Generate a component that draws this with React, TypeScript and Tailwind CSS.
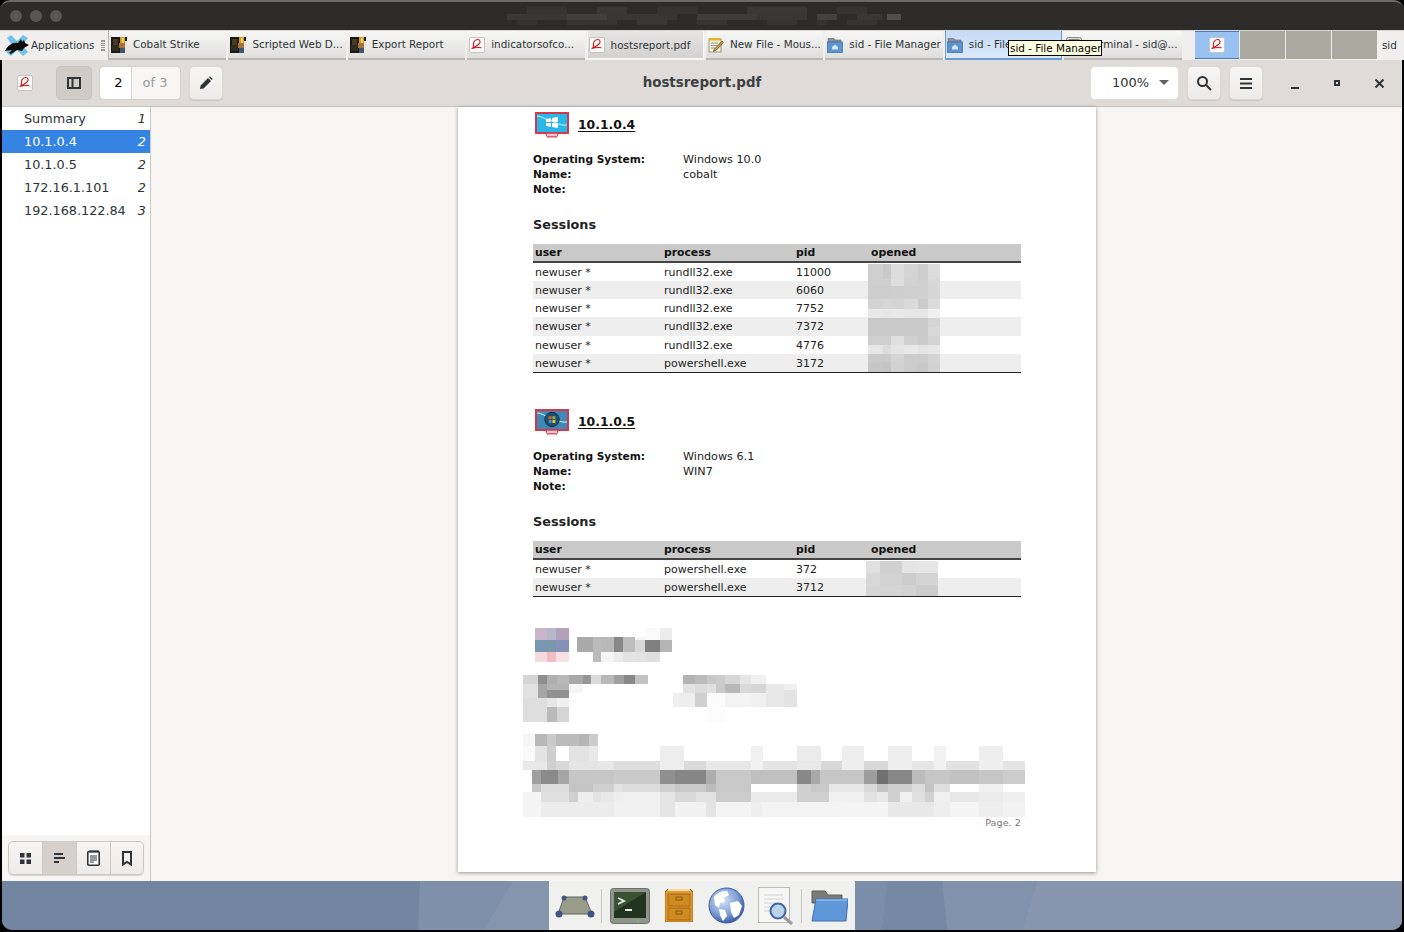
import { ReactNode } from "react";

type Row = [number, number, [number, number, string][]];

const g = (v: string) => `#${v}${v}${v}`;

function Mosaic({ rows, viewBox }: { rows: Row[]; viewBox: string }) {
  return (
    <svg viewBox={viewBox} preserveAspectRatio="none" shapeRendering="crispEdges" className="w-full h-full block">
      {rows.map(([y0, y1, cells], i) =>
        cells.map(([x0, x1, c], j) => <rect key={`${i}-${j}`} x={x0} y={y0} width={x1 - x0} height={y1 - y0} fill={c} />)
      )}
    </svg>
  );
}

function columns(xs: number[], y0: number, y1: number, cols: string[]): Row {
  return [y0, y1, cols.map((c, i) => [xs[i], xs[i + 1], g(c)] as [number, number, string])];
}

const openedXs = [265, 310, 335, 372, 415, 445, 480];
const openedRows: Row[] = [
  columns(openedXs, 75, 118, ["cf", "c9", "dc", "d4", "cd", "dc"]),
  columns(openedXs, 118, 140, ["cf", "cf", "de", "d2", "cf", "d8"]),
  columns(openedXs, 140, 180, ["cd", "cd", "ce", "cf", "cf", "d6"]),
  columns(openedXs, 180, 208, ["d3", "d6", "d4", "da", "cc", "db"]),
  columns(openedXs, 208, 235, ["e8", "e6", "e8", "e6", "e6", "f0"]),
  columns(openedXs, 235, 262, ["c8", "c8", "c8", "c9", "c9", "d4"]),
  columns(openedXs, 262, 288, ["c8", "c8", "c8", "c9", "c9", "d8"]),
  columns(openedXs, 288, 315, ["cf", "cf", "e0", "d0", "cb", "d4"]),
  columns(openedXs, 315, 342, ["e6", "dc", "e4", "e8", "e4", "e8"]),
  columns(openedXs, 342, 365, ["ca", "ca", "d4", "cc", "cc", "d4"]),
  columns(openedXs, 365, 395, ["c6", "c4", "d2", "cc", "c8", "d2"]),
];

const openedRows2: Row[] = [
  columns([0, 14, 36, 50, 72], 0, 12, ["e0", "d0", "e4", "e6"]),
  columns([0, 14, 36, 50, 72], 12, 24, ["d8", "d2", "cc", "d4"]),
  columns([0, 14, 36, 50, 72], 24, 35, ["d6", "d4", "d2", "cc"]),
];

// blurred block under the second session table, in zoomed crop units
const footerRows: Row[] = [
  [27, 63, [[74, 108, "#c9b5c9"], [108, 136, "#b5b7cb"], [136, 175, "#b1a1bb"], [443, 478, "#ececec"], [398, 443, "#fafafa"]]],
  [55, 63, [[245, 270, "#bbbbbb"], [270, 308, "#b8b8b8"], [308, 333, "#888888"], [333, 370, "#bdbdbd"], [370, 398, "#f4f4f4"], [198, 245, "#a9a9a9"]]],
  [63, 100, [[74, 108, "#7b96b0"], [108, 136, "#7a96ad"], [136, 175, "#8591b5"], [198, 245, "#a9a9a9"], [245, 270, "#bbbbbb"], [270, 308, "#b8b8b8"], [308, 333, "#888888"], [333, 370, "#bdbdbd"], [370, 398, "#d8d8d8"], [398, 443, "#808080"], [443, 478, "#b5b5b5"]]],
  [100, 130, [[74, 108, "#f5dadd"], [108, 136, "#f2bcc3"], [136, 175, "#f7e0e2"], [245, 270, "#bbbbbb"], [270, 308, "#f5f5f5"], [308, 333, "#ebebeb"], [333, 370, "#e3e3e3"], [370, 398, "#e2e2e2"], [398, 443, "#dfdfdf"]]],
  [168, 195, [[38, 82, "#d5d5d5"], [82, 108, "#8e8e8e"], [108, 138, "#b0b0b0"], [138, 175, "#b8b8b8"], [175, 215, "#a8a8a8"], [215, 240, "#979797"], [240, 268, "#dadada"], [268, 308, "#b9b9b9"], [308, 337, "#a0a0a0"], [337, 370, "#888888"], [370, 408, "#c3c3c3"], [512, 548, "#b3b3b3"], [548, 582, "#bbbbbb"], [582, 610, "#c8c8c8"], [610, 636, "#cccccc"], [636, 680, "#d6d6d6"], [680, 713, "#e6e6e6"], [713, 757, "#f0f0f0"]]],
  [195, 212, [[38, 82, "#e1e1e1"], [82, 108, "#a5a5a5"], [108, 175, "#b4b4b4"], [175, 215, "#f6f6f6"], [512, 548, "#e3e3e3"], [548, 582, "#dcdcdc"], [582, 610, "#e0e0e0"], [610, 636, "#c9c9c9"], [636, 680, "#b9b9b9"], [680, 713, "#d9d9d9"], [713, 757, "#d6d6d6"], [757, 810, "#e8e8e8"], [810, 850, "#f0f0f0"]]],
  [212, 222, [[38, 82, "#e1e1e1"], [82, 108, "#a5a5a5"], [108, 175, "#919191"], [175, 215, "#f6f6f6"], [512, 548, "#e3e3e3"], [548, 582, "#dcdcdc"], [582, 610, "#e0e0e0"], [610, 636, "#c9c9c9"], [636, 680, "#b9b9b9"], [680, 713, "#d9d9d9"], [713, 757, "#d6d6d6"], [757, 810, "#e8e8e8"], [810, 850, "#e3e3e3"]]],
  [222, 237, [[38, 82, "#e1e1e1"], [82, 108, "#a5a5a5"], [108, 175, "#919191"], [482, 548, "#eeeeee"], [548, 582, "#d0d0d0"], [582, 636, "#fbfbfb"], [636, 713, "#f3f3f3"], [713, 757, "#f0f0f0"], [757, 810, "#e7e7e7"], [810, 850, "#e3e3e3"]]],
  [237, 264, [[38, 108, "#dedede"], [108, 138, "#e6e6e6"], [138, 175, "#f0f0f0"], [482, 548, "#eeeeee"], [548, 582, "#d0d0d0"], [582, 636, "#fbfbfb"], [636, 713, "#f3f3f3"], [713, 757, "#f0f0f0"], [757, 810, "#e7e7e7"], [810, 850, "#e3e3e3"]]],
  [264, 308, [[38, 108, "#dedede"], [108, 138, "#bababa"], [138, 175, "#d5d5d5"], [582, 636, "#fcfcfc"]]],
  [345, 380, [[38, 74, "#f5f5f5"], [74, 108, "#b8b8b8"], [108, 136, "#c9c9c9"], [136, 175, "#bbbbbb"], [175, 205, "#bbbbbb"], [205, 232, "#b5b5b5"], [232, 260, "#cccccc"]]],
  [380, 425, [[38, 74, "#fafafa"], [74, 108, "#e3e3e3"], [108, 136, "#cfcfcf"], [175, 232, "#e3e3e3"], [232, 260, "#e9e9e9"], [444, 515, "#ededed"], [713, 748, "#f0f0f0"], [850, 920, "#ebebeb"], [982, 1047, "#eeeeee"], [1118, 1190, "#eeeeee"], [1255, 1290, "#f2f2f2"], [1388, 1460, "#eeeeee"]]],
  [425, 453, [[38, 108, "#e8e8e8"], [108, 136, "#d0d0d0"], [136, 175, "#d8d8d8"], [175, 260, "#e5e5e5"], [260, 308, "#e7e7e7"], [308, 444, "#dedede"], [444, 515, "#ededed"], [515, 580, "#dadada"], [580, 713, "#e8e8e8"], [713, 748, "#f1f1f1"], [748, 850, "#e4e4e4"], [850, 920, "#e8e8e8"], [920, 982, "#d8d8d8"], [982, 1047, "#eeeeee"], [1047, 1118, "#d8d8d8"], [1118, 1190, "#eeeeee"], [1190, 1255, "#e6e6e6"], [1255, 1290, "#f0f0f0"], [1290, 1388, "#e2e2e2"], [1388, 1460, "#eeeeee"], [1460, 1524, "#e4e4e4"]]],
  [453, 495, [[65, 92, "#a0a0a0"], [92, 142, "#8a8a8a"], [142, 175, "#a5a5a5"], [175, 308, "#c6c6c6"], [308, 444, "#cacaca"], [444, 488, "#8f8f8f"], [488, 580, "#868686"], [580, 610, "#adadad"], [610, 713, "#c8c8c8"], [713, 748, "#bfbfbf"], [748, 850, "#c0c0c0"], [850, 890, "#888888"], [890, 917, "#a8a8a8"], [917, 1047, "#c6c6c6"], [1047, 1085, "#9d9d9d"], [1085, 1118, "#707070"], [1118, 1190, "#878787"], [1190, 1228, "#bcbcbc"], [1228, 1302, "#c6c6c6"], [1302, 1388, "#c2c2c2"], [1388, 1460, "#c6c6c6"], [1460, 1524, "#cccccc"]]],
  [495, 520, [[65, 92, "#c8c8c8"], [92, 175, "#dcdcdc"], [175, 245, "#c5c5c5"], [245, 308, "#d0d0d0"], [308, 330, "#e3e3e3"], [330, 444, "#dddddd"], [444, 488, "#d0d0d0"], [488, 580, "#c8c8c8"], [580, 610, "#bbbbbb"], [610, 713, "#c8c8c8"], [850, 890, "#d0d0d0"], [890, 945, "#c8c8c8"], [945, 982, "#e6e6e6"], [982, 1047, "#e8e8e8"], [1047, 1085, "#d8d8d8"], [1085, 1118, "#c4c4c4"], [1118, 1190, "#d0d0d0"], [1190, 1228, "#dcdcdc"], [1228, 1255, "#c4c4c4"], [1255, 1302, "#dedede"], [1388, 1460, "#f0f0f0"]]],
  [520, 550, [[38, 92, "#f4f4f4"], [92, 175, "#e0e0e0"], [175, 200, "#d0d0d0"], [200, 245, "#eeeeee"], [245, 270, "#e4e4e4"], [270, 308, "#e8e8e8"], [308, 330, "#eeeeee"], [330, 444, "#f0f0f0"], [444, 488, "#e4e4e4"], [488, 550, "#d8d8d8"], [550, 610, "#e2e2e2"], [610, 713, "#cccccc"], [713, 850, "#eaeaea"], [850, 945, "#cfcfcf"], [945, 1047, "#f0f0f0"], [1047, 1085, "#e2e2e2"], [1085, 1118, "#e8e8e8"], [1118, 1155, "#d0d0d0"], [1155, 1190, "#f0f0f0"], [1190, 1228, "#e0e0e0"], [1228, 1255, "#d2d2d2"], [1255, 1302, "#f0f0f0"], [1302, 1388, "#e8e8e8"], [1388, 1460, "#ebebeb"], [1460, 1524, "#efefef"]]],
  [550, 594, [[38, 92, "#f4f4f4"], [92, 308, "#ececec"], [308, 444, "#f0f0f0"], [444, 488, "#e4e4e4"], [488, 580, "#f1f1f1"], [580, 610, "#e4e4e4"], [610, 713, "#f3f3f3"], [713, 745, "#eeeeee"], [745, 980, "#f3f3f3"], [980, 1118, "#f4f4f4"], [1118, 1255, "#e8e8e8"], [1255, 1302, "#eeeeee"], [1302, 1388, "#f4f4f4"], [1388, 1460, "#eeeeee"], [1460, 1524, "#f2f2f2"]]],
];

const titleRows: Row[] = [
  [0, 8, [[20, 60, "#363533"], [90, 120, "#393836"], [150, 190, "#363533"], [240, 300, "#393836"], [330, 360, "#363533"]]],
  [8, 14, [[0, 60, "#393836"], [60, 100, "#403f3d"], [100, 170, "#383735"], [190, 250, "#3e3d3b"], [250, 300, "#383735"], [310, 330, "#434240"], [350, 375, "#393836"], [380, 394, "#504f4d"]]],
  [14, 20, [[10, 30, "#343331"], [60, 110, "#363533"], [130, 160, "#383735"], [190, 220, "#353432"], [260, 290, "#353432"], [310, 320, "#333230"], [340, 370, "#353432"]]],
];

function PdfIcon({ size = 16 }: { size?: number }) {
  return (
    <svg width={size} height={size} viewBox="0 0 16 16" className="shrink-0">
      <rect x="0.5" y="0.5" width="15" height="15" rx="1.5" fill="#fbfbfb" stroke="#c4c4c4" />
      <path d="M4.5 10C3.5 6 5.5 2.5 8.5 2.5c3 0 3.5 3 1 5-2 1.6-4.5 3-7 4 3-.8 7-1.2 10-.8" fill="none" stroke="#d3141c" strokeWidth="1.1" />
    </svg>
  );
}

function CobaltIcon() {
  return (
    <svg width="16" height="16" viewBox="0 0 16 16" shapeRendering="crispEdges" className="shrink-0">
      <rect width="16" height="16" fill="#1c1712" />
      <rect x="2" y="2" width="5" height="6" fill="#4b3a1e" />
      <rect x="1" y="8" width="7" height="6" fill="#2e2a1d" />
      <rect x="9" y="0" width="5" height="6" fill="#d79a24" />
      <rect x="8" y="6" width="6" height="5" fill="#a5713f" />
      <rect x="11" y="1" width="2" height="5" fill="#e9d44a" />
      <rect x="9" y="11" width="5" height="5" fill="#40556d" />
      <rect x="14" y="4" width="2" height="12" fill="#e8e4dc" />
    </svg>
  );
}

function NoteIcon() {
  return (
    <svg width="16" height="16" viewBox="0 0 16 16" className="shrink-0">
      <rect x="1" y="2" width="12" height="13" fill="#f4f0df" stroke="#8a8464" strokeWidth="0.8" />
      <rect x="1" y="1" width="12" height="2.5" fill="#e0b52c" />
      <path d="M3 6h7M3 8.5h6M3 11h4" stroke="#85826e" strokeWidth="0.8" />
      <path d="M6 12.5 14 4l1.5 1.5L8 13.5l-2.5.8z" fill="#c7973b" stroke="#4c3b1c" strokeWidth="0.6" />
    </svg>
  );
}

function TerminalIcon() {
  return (
    <svg width="16" height="16" viewBox="0 0 16 16" className="shrink-0">
      <rect x="0.5" y="0.5" width="15" height="15" rx="2" fill="#d9d9d6" stroke="#8c8c88" />
      <rect x="2.5" y="2.5" width="11" height="9" fill="#2c3a2a" />
    </svg>
  );
}

function FolderIcon() {
  return (
    <svg width="16" height="16" viewBox="0 0 16 16" className="shrink-0">
      <path d="M1 1.5h6l1 1.5h6v4H1z" fill="#8a8f96" stroke="#64686e" strokeWidth="0.6" />
      <rect x="0.5" y="5" width="15" height="10.5" fill="#5b93cf" stroke="#3a689e" strokeWidth="0.7" />
      <path d="M5 10l3-2.5L11 10v2.5H5z" fill="#d5e6f7" />
    </svg>
  );
}

function HostIcon({ win7 = false }: { win7?: boolean }) {
  return (
    <svg width="34" height="27" viewBox="0 0 34 27" className="block">
      <rect x="1" y="1" width="32" height="20" fill={win7 ? "#3d8ab8" : "#2ab7ea"} stroke="#d23a48" strokeWidth="2" />
      <path d="M2 4c5 0 7 3 12 4s10 6 18 5" fill="none" stroke="#d7f3fb" strokeWidth="1" />
      {win7 ? (
        <g>
          <circle cx="17" cy="10.5" r="7.2" fill="#1f4e6e" stroke="#0f2f47" />
          <rect x="13.6" y="7.2" width="3" height="3" fill="#e2542f" />
          <rect x="17.4" y="7.2" width="3" height="3" fill="#7fb640" />
          <rect x="13.6" y="11" width="3" height="3" fill="#3f8fd2" />
          <rect x="17.4" y="11" width="3" height="3" fill="#f3c42e" />
        </g>
      ) : (
        <g fill="#ffffff">
          <path d="M11 7l5-.8V10h-5zM17 6.1l6-1V10h-6zM11 11h5v3.8l-5-.8zM17 11h6v5l-6-1z" />
        </g>
      )}
      <path d="M10 21h14l-2 4.5h-10z" fill="#d9475a" />
      <rect x="12" y="21.8" width="10" height="2.4" fill="#f3c4cb" />
    </svg>
  );
}

function Tab({ icon, label, active, hover }: { icon: ReactNode; label: string; active?: boolean; hover?: boolean }) {
  return (
    <div
      className={`w-[117.4px] h-full shrink-0 mr-[2px] flex items-center gap-[5px] border-b-2 ${
        hover
          ? "pl-0 bg-gradient-to-b from-[#c5dbf7] to-[#dbe8f9] border-[#6e9bd6] border-x"
          : active
            ? "pl-0 bg-gradient-to-b from-[#e6e5e3] to-[#d2d1cf] border-[#f7f7f6] border-x"
            : "pl-[1px] bg-gradient-to-b from-[#f7f7f6] to-[#dfdedc] border-[#b9b8b3]"
      }`}
    >
      <span className="w-[18px] flex justify-center shrink-0">{icon}</span>
      <span className={`text-[10.4px] text-[#2e3436] whitespace-nowrap ${active ? "pt-[2px]" : "pt-[1px]"}`}>{label}</span>
    </div>
  );
}

function ToolButton({ children, className = "" }: { children: ReactNode; className?: string }) {
  return (
    <div className={`h-[34px] rounded-[5px] flex items-center justify-center bg-gradient-to-b from-[#f6f5f4] to-[#edebe9] shadow-[0_1px_1px_#c9c5c0] border border-[#dcd8d4] ${className}`}>
      {children}
    </div>
  );
}

function Session({ user, process, pid }: { user: string; process: string; pid: string }) {
  return (
    <>
      <span className="pl-[2px]">{user}</span>
      <span>{process}</span>
      <span>{pid}</span>
    </>
  );
}

function HostSection({
  ip,
  os,
  name,
  rows,
  opened,
  win7,
  openedClass,
}: {
  ip: string;
  os: string;
  name: string;
  rows: { process: string; pid: string }[];
  opened: Row[];
  win7?: boolean;
  openedClass: string;
}) {
  return (
    <section className="pl-[75px] pr-[75px]">
      <div className="flex items-center h-[27px] pl-[2px] gap-[9px]">
        <HostIcon win7={win7} />
        <span className="text-[12.4px] font-bold text-[#111] underline underline-offset-2">{ip}</span>
      </div>
      <div className="mt-[13px] grid grid-cols-[150px_1fr] text-[10.6px] leading-[15px] text-[#222]">
        <span className="font-bold text-[#111]">Operating System:</span>
        <span className="text-[11.2px]">{os}</span>
        <span className="font-bold text-[#111]">Name:</span>
        <span className="text-[11.2px]">{name}</span>
        <span className="font-bold text-[#111]">Note:</span>
      </div>
      <h3 className="mt-[18px] h-[20px] leading-[20px] text-[12.8px] font-bold text-[#222]">Sessions</h3>
      <div className="mt-[9px] relative">
        <div className="h-[19px] bg-[#c9c9c9] border-b-2 border-[#444] grid grid-cols-[131px_132px_75px_1fr] text-[10.8px] font-bold leading-[15px] pt-[1px] text-[#111]">
          <span className="pl-[2px]">user</span>
          <span>process</span>
          <span>pid</span>
          <span>opened</span>
        </div>
        <div className="border-b border-[#222]">
          {rows.map((r, i) => (
            <div
              key={i}
              className={`h-[18.15px] leading-[19px] grid grid-cols-[131px_132px_75px_1fr] text-[11px] text-[#222] ${i % 2 ? "bg-[#eeeeee]" : "bg-white"}`}
            >
              <Session user="newuser *" process={r.process} pid={r.pid} />
            </div>
          ))}
        </div>
        <div className={`absolute w-[72px] ${openedClass}`}>
          <Mosaic rows={opened} viewBox={opened === openedRows ? "265 75 215 320" : "0 0 72 35"} />
        </div>
      </div>
    </section>
  );
}

export default function App() {
  const tabs = [
    { icon: <CobaltIcon />, label: "Cobalt Strike" },
    { icon: <CobaltIcon />, label: "Scripted Web D..." },
    { icon: <CobaltIcon />, label: "Export Report" },
    { icon: <PdfIcon />, label: "indicatorsofco..." },
    { icon: <PdfIcon />, label: "hostsreport.pdf", active: true },
    { icon: <NoteIcon />, label: "New File - Mous..." },
    { icon: <FolderIcon />, label: "sid - File Manager" },
    { icon: <FolderIcon />, label: "sid - File Manager", hover: true },
    { icon: <TerminalIcon />, label: "Terminal - sid@..." },
  ];
  const sidebar = [
    { label: "Summary", page: "1" },
    { label: "10.1.0.4", page: "2", active: true },
    { label: "10.1.0.5", page: "2" },
    { label: "172.16.1.101", page: "2" },
    { label: "192.168.122.84", page: "3" },
  ];

  return (
    <div className="relative w-[1404px] h-[932px] bg-black overflow-hidden px-[2px] pb-[2px] font-['DejaVu_Sans',sans-serif] flex flex-col">
      <header className="h-[30px] shrink-0 -mx-[2px] bg-[#2d2c2a] border-t-2 border-[#6a6a68] rounded-t-[10px] flex items-center relative">
        <div className="pl-[10px] flex gap-[8px]">
          <span className="w-[12px] h-[12px] rounded-full bg-[#585755]" />
          <span className="w-[12px] h-[12px] rounded-full bg-[#585755]" />
          <span className="w-[12px] h-[12px] rounded-full bg-[#585755]" />
        </div>
        <div className="ml-[445px] w-[394px] h-[18px]">
          <Mosaic rows={titleRows} viewBox="0 0 394 20" />
        </div>
      </header>

      {/* panel with the window buttons */}
      <div className="h-[30px] shrink-0 -mx-[2px] flex bg-[#f0efee] border-t border-[#d8d7d5] relative">
        <div className="w-[109px] pl-[4px] flex items-center gap-[1px] border-r border-[#b5b4af]">
          <svg width="26" height="24" viewBox="0 0 26 24" className="shrink-0">
            <path d="M3 4 7 1l6 6 6-6 5 3-6 7 6 7-5 4-6-6-6 6-5-4 6-7z" fill="#6fc3ea" />
            <path d="M1 17c3-6 8-9 13-8l3-4 1 3 2-2 1 3 4 2-5 3-2 3-5-1-6 4-2-1 3-3z" fill="#0b0b0b" />
          </svg>
          <span className="text-[10.4px] text-[#2e3436] whitespace-nowrap">Applications</span>
          <span className="ml-[6px] w-[4px] h-[11px] border-y border-[#9a9a96] bg-[repeating-linear-gradient(180deg,#9a9a96_0_1px,transparent_1px_2px)]" />
        </div>
        <div className="flex h-full">
          {tabs.map((t, i) => (
            <Tab key={i} icon={t.icon} label={t.label} active={t.active} hover={t.hover} />
          ))}
        </div>
        <div className="ml-[11.4px] flex h-full gap-[1px] pb-[1px]">
          <div className="w-[44px] bg-[#99c1f1] border-y border-[#4a7cc0] flex items-center justify-center">
            <PdfIcon />
          </div>
          <div className="w-[45px] bg-[#aaa99f]" />
          <div className="w-[45px] bg-[#aaa99f]" />
          <div className="w-[45px] bg-[#aaa99f]" />
        </div>
        <span className="ml-[5px] leading-[28px] text-[10.4px] text-[#2e3436]">sid</span>
        <div className="absolute left-[1008px] top-[9px] h-[16px] w-[94px] bg-[#ffffe1] border border-black text-[10.4px] leading-[15px] text-black pl-[1px] whitespace-nowrap">
          sid - File Manager
        </div>
      </div>

      {/* evince header bar */}
      <div className="h-[47px] shrink-0 bg-[#dedbd8] border-b border-[#c6c2bd] flex items-center pl-[15px] pr-[17px] relative">
        <PdfIcon />
        <div className="ml-[23px] w-[36px] h-[34px] rounded-[5px] bg-[#cfcbc7] border border-[#c6c2bd] flex items-center justify-center">
          <svg width="14" height="12" viewBox="0 0 14 12" fill="none" stroke="#2e3436" strokeWidth="2">
            <rect x="1" y="1" width="12" height="10" />
            <path d="M5.5 1v10" />
          </svg>
        </div>
        <div className="ml-[7px] w-[82px] h-[34px] rounded-[5px] bg-white border border-[#d4d0cb] flex items-center text-[13px]">
          <span className="w-[32px] h-full flex items-center justify-center border-r border-[#d8d4cf] text-black pl-[6px]">2</span>
          <span className="flex-1 h-full flex items-center justify-center bg-[#f7f6f5] rounded-r-[5px] text-[#9a9a98] pr-[2px]">of 3</span>
        </div>
        <ToolButton className="ml-[8px] w-[34px]">
          <svg width="14" height="14" viewBox="0 0 14 14">
            <path d="M1 13l.6-3.6L9 2l3 3-7.4 7.4zM10 1l1-.8 2.8 2.8-1 1z" fill="#2e3436" />
          </svg>
        </ToolButton>
        <h1 className="absolute left-0 right-0 text-center text-[13.4px] font-bold text-[#3d4042] pointer-events-none">hostsreport.pdf</h1>
        <div className="ml-auto w-[89px] h-[34px] rounded-[5px] bg-white border border-[#e2dfdb] flex items-center text-[13px] text-[#2e3436] pl-[21px] gap-[10px]">
          100%
          <svg width="10" height="6" viewBox="0 0 10 6">
            <path d="M0 0h10L5 5z" fill="#5e6264" />
          </svg>
        </div>
        <ToolButton className="ml-[8px] w-[34px]">
          <svg width="16" height="16" viewBox="0 0 16 16" fill="none" stroke="#2e3436" strokeWidth="2">
            <circle cx="6.5" cy="6.5" r="4.5" />
            <path d="M10 10l5 5" />
          </svg>
        </ToolButton>
        <ToolButton className="ml-[8px] w-[34px]">
          <svg width="12" height="11" viewBox="0 0 12 11" fill="#2e3436">
            <rect width="12" height="2" />
            <rect y="4.5" width="12" height="2" />
            <rect y="9" width="12" height="2" />
          </svg>
        </ToolButton>
        <div className="ml-[26px] w-[12px] flex justify-center pt-[10px]">
          <span className="w-[8px] h-[2px] bg-[#2e3436]" />
        </div>
        <div className="ml-[30px] w-[12px] flex justify-center">
          <span className="w-[6px] h-[6px] border-2 border-[#2e3436]" />
        </div>
        <div className="ml-[30px] w-[12px] flex justify-center">
          <svg width="9" height="9" viewBox="0 0 9 9" stroke="#2e3436" strokeWidth="2">
            <path d="M0.5 0.5l8 8M8.5 0.5l-8 8" />
          </svg>
        </div>
      </div>

      <main className="flex-1 min-h-0 flex bg-[#f6f5f4]">
        <aside className="w-[149px] shrink-0 border-r border-[#cdc7c2] flex flex-col">
          <nav className="flex-1 bg-white">
            {sidebar.map((s) => (
              <div
                key={s.label}
                className={`h-[23px] flex items-center justify-between pl-[22px] pr-[4px] text-[12.8px] ${s.active ? "bg-[#3584e4] text-white" : "text-[#2e3436]"}`}
              >
                <span>{s.label}</span>
                <span className="italic">{s.page}</span>
              </div>
            ))}
          </nav>
          <div className="h-[46px] flex items-center pl-[6px] bg-[#f6f5f4]">
            <div className="w-[136px] h-[34px] rounded-[5px] border border-[#cdc7c2] flex overflow-hidden bg-gradient-to-b from-[#f6f5f4] to-[#edebe9] shadow-[0_1px_1px_#d8d4cf]">
              <div className="w-[34px] flex items-center justify-center border-r border-[#cdc7c2]">
                <svg width="11" height="11" viewBox="0 0 11 11" fill="#2e3436">
                  <rect width="4.5" height="4.5" />
                  <rect x="6.5" width="4.5" height="4.5" />
                  <rect y="6.5" width="4.5" height="4.5" />
                  <rect x="6.5" y="6.5" width="4.5" height="4.5" />
                </svg>
              </div>
              <div className="w-[34px] flex items-center justify-center bg-[#d5d0cc] border-r border-[#cdc7c2]">
                <svg width="11" height="11" viewBox="0 0 11 11" fill="#2e3436">
                  <rect width="9" height="2" />
                  <rect y="4" width="11" height="2" />
                  <rect y="8" width="5" height="2" />
                </svg>
              </div>
              <div className="w-[34px] flex items-center justify-center border-r border-[#cdc7c2]">
                <svg width="13" height="16" viewBox="0 0 13 16">
                  <rect x="0.8" y="1.5" width="11.4" height="13.7" rx="1" fill="#fff" stroke="#2e3436" strokeWidth="1.6" />
                  <path d="M3 0v3M5 0v3M7 0v3M9 0v3M11 0v3" stroke="#2e3436" />
                  <path d="M3 6h7M3 8h7M3 10h7M3 12h4" stroke="#2e3436" />
                </svg>
              </div>
              <div className="flex-1 flex items-center justify-center">
                <svg width="10" height="15" viewBox="0 0 10 15" fill="none" stroke="#2e3436" strokeWidth="2">
                  <path d="M1 1h8v12.5L5 11l-4 2.5z" />
                </svg>
              </div>
            </div>
          </div>
        </aside>

        <div className="flex-1 min-w-0 pl-[307px]">
          <article className="w-[638px] h-[765px] bg-white shadow-[0_1px_4px_rgba(0,0,0,0.4)] pt-[5px] relative">
            <HostSection
              ip="10.1.0.4"
              os="Windows 10.0"
              name="cobalt"
              opened={openedRows}
              openedClass="left-[335px] top-[20px] h-[108px]"
              rows={[
                { process: "rundll32.exe", pid: "11000" },
                { process: "rundll32.exe", pid: "6060" },
                { process: "rundll32.exe", pid: "7752" },
                { process: "rundll32.exe", pid: "7372" },
                { process: "rundll32.exe", pid: "4776" },
                { process: "powershell.exe", pid: "3172" },
              ]}
            />
            <div className="h-[36px]" />
            <HostSection
              ip="10.1.0.5"
              os="Windows 6.1"
              name="WIN7"
              win7
              opened={openedRows2}
              openedClass="left-[333px] top-[20px] h-[35px]"
              rows={[
                { process: "powershell.exe", pid: "372" },
                { process: "powershell.exe", pid: "3712" },
              ]}
            />
            <div className="ml-[65px] mt-[31px] w-[502px] h-[189px]">
              <Mosaic rows={footerRows} viewBox="38 27 1486 567" />
            </div>
            <p className="-mt-[1px] pr-[75px] text-right text-[9.5px] text-[#777] tracking-[0.1px]">Page. 2</p>
          </article>
        </div>
      </main>

      <footer className="h-[49px] shrink-0 bg-[#6f83a0] rounded-b-[10px] overflow-hidden relative flex justify-center">
        <svg viewBox="0 0 1400 49" className="absolute inset-0 w-full h-full" preserveAspectRatio="none">
          <path d="M0 0H1400V49H0z" fill="#7185a1" />
          <path d="M418 0H511L481 49H416z" fill="#7e90aa" />
          <path d="M511 0H547V49H481z" fill="#8595ad" />
          <path d="M852 0H886L880 49H852z" fill="#7b8ea9" />
          <path d="M886 0H940L945 49H880z" fill="#7589a4" />
          <path d="M940 0H1035L1020 49H945z" fill="#8092ac" />
          <path d="M1035 0H1400V49H1020z" fill="#8796ae" />
        </svg>
        <div className="relative w-[306px] h-full bg-[#f0f0ef] flex items-center">
          <svg width="40" height="24" viewBox="0 0 40 24" className="ml-[6px]">
            <path d="M9 3h21l7 17H3z" fill="#9a9c8a" stroke="#66675a" />
            <circle cx="9" cy="4" r="2.5" fill="#3f5684" />
            <circle cx="30" cy="4" r="2.5" fill="#3f5684" />
            <circle cx="4" cy="20" r="3.5" fill="#3f5684" />
            <circle cx="36" cy="20" r="3.5" fill="#3f5684" />
          </svg>
          <span className="ml-[6px] w-px h-[34px] bg-[#c4c4c2]" />
          <svg width="40" height="36" viewBox="0 0 40 36" className="ml-[8px]">
            <rect x="0.5" y="0.5" width="39" height="35" rx="3" fill="#8f948d" stroke="#6d716a" />
            <rect x="4" y="4" width="32" height="26" fill="#22341f" />
            <path d="M4 4h32L4 24z" fill="#3a5134" />
            <path d="M8 10l6 3-6 3" fill="none" stroke="#e8efe2" strokeWidth="1.8" />
            <path d="M15 22h7" stroke="#e8efe2" strokeWidth="1.8" />
            <rect x="27" y="31.5" width="2" height="2" fill="#73c24c" />
          </svg>
          <svg width="28" height="33" viewBox="0 0 28 33" className="ml-[15px]">
            <path d="M3 0h22l3 3v30H0V3z" fill="#e09a2e" stroke="#a06a16" />
            <path d="M3 1h22" stroke="#f4d9a4" strokeWidth="2" />
            <rect x="3" y="5" width="22" height="12" fill="#d08a22" stroke="#a06a16" />
            <rect x="3" y="19" width="22" height="12" fill="#d08a22" stroke="#a06a16" />
            <rect x="11" y="8" width="6" height="3" fill="none" stroke="#8a5a10" />
            <rect x="11" y="22" width="6" height="3" fill="none" stroke="#8a5a10" />
          </svg>
          <svg width="37" height="37" viewBox="0 0 37 37" className="ml-[15px]">
            <defs>
              <radialGradient id="globe" cx="0.4" cy="0.35" r="0.7">
                <stop offset="0" stopColor="#d6e2f5" />
                <stop offset="0.6" stopColor="#7fa0d6" />
                <stop offset="1" stopColor="#2f4f9e" />
              </radialGradient>
            </defs>
            <circle cx="18.5" cy="18.5" r="17.5" fill="url(#globe)" stroke="#3c5ba6" />
            <path d="M6 10c4-5 9-6 13-6l2 4-5 3 1 4-5 1-1 5-4-3zM22 16l8-2 4 5-3 9-5 3-3-6zM11 22l6 1 2 6-4 5-3-6z" fill="#ffffff" />
          </svg>
          <svg width="37" height="38" viewBox="0 0 37 38" className="ml-[13px]">
            <rect x="0.5" y="0.5" width="31" height="35" fill="#f6f6f6" stroke="#b9b9b9" />
            <path d="M6 8h19M6 12h19M6 16h12M6 20h10M6 24h10" stroke="#d0d0d0" />
            <circle cx="20" cy="24" r="7.5" fill="#bcd3ec" stroke="#3f66a6" strokeWidth="2" />
            <path d="M26 30l8 7" stroke="#9a9a9a" strokeWidth="3" />
          </svg>
          <span className="ml-[6px] w-px h-[34px] bg-[#c4c4c2]" />
          <svg width="37" height="32" viewBox="0 0 37 32" className="ml-[9px]">
            <path d="M1 1h13l3 4h14v8H1z" fill="#7a7a7a" stroke="#5f5f5f" />
            <path d="M5 9h32l-2 22H1z" fill="#5f98d8" stroke="#3f6fb0" />
            <path d="M5 10h31" stroke="#a6c8ee" />
          </svg>
        </div>
      </footer>
    </div>
  );
}
